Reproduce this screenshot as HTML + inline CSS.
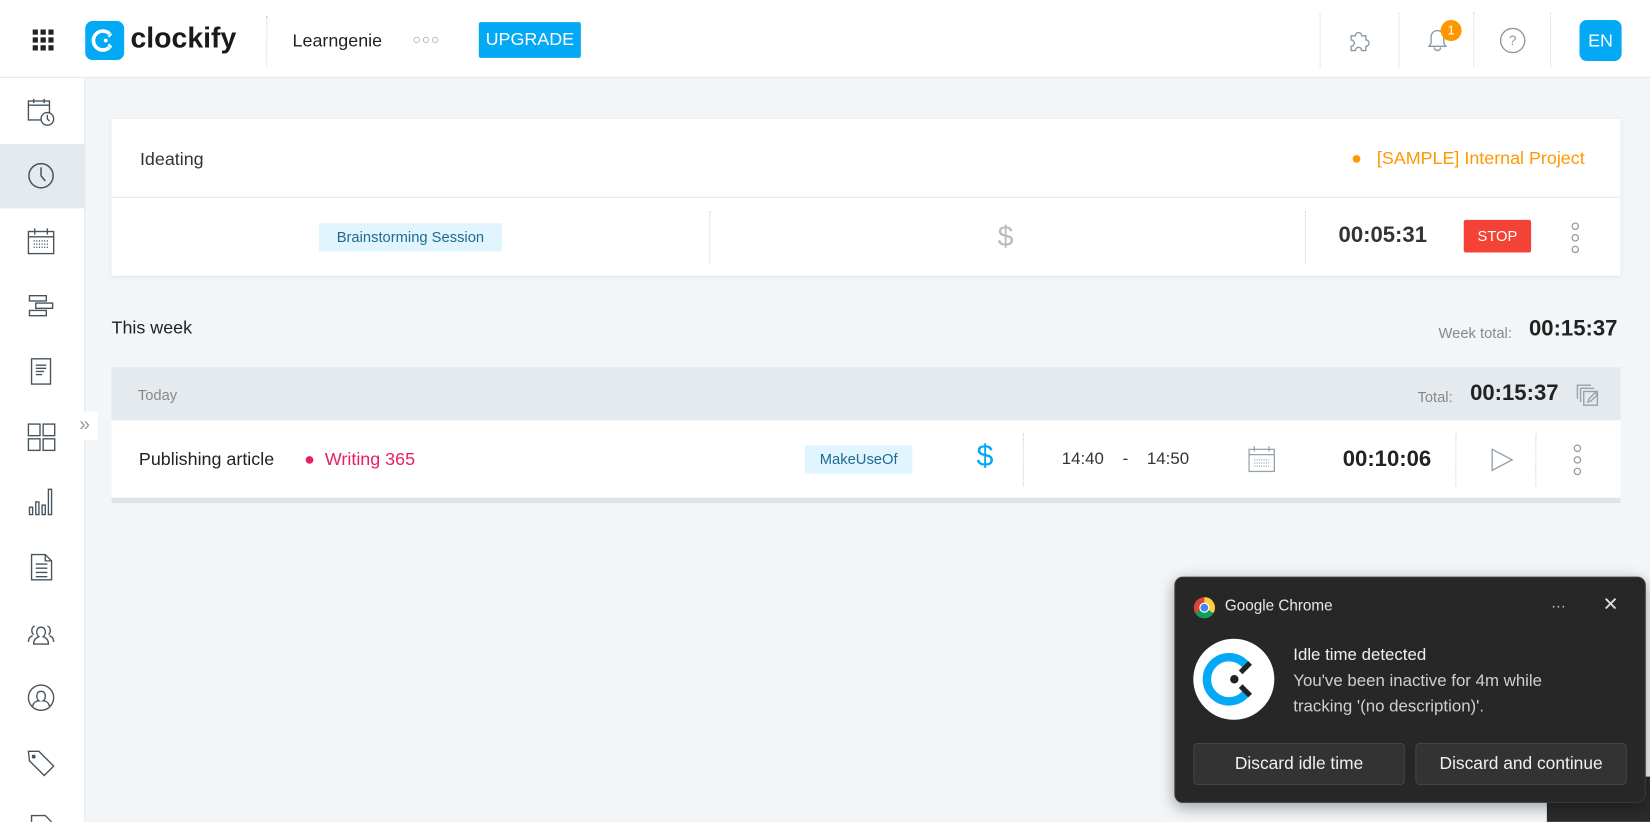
<!DOCTYPE html>
<html><head><meta charset="utf-8"><style>
*{box-sizing:border-box;margin:0;padding:0}
html,body{width:1650px;height:822px;overflow:hidden;background:#f2f6f8;font-family:"Liberation Sans",Arial,sans-serif}
#o{position:relative;width:1650px;height:822px;overflow:hidden}
#w{position:absolute;left:0;top:0;width:1568px;height:781px;overflow:hidden;transform:scale(1.05230);transform-origin:0 0;background:#f2f6f8}
.a{position:absolute}
.hdr{left:0;top:0;width:1568px;height:74px;background:#fff;border-bottom:1px solid #e1e7ec}
.vd{position:absolute;top:12px;height:52px;border-left:1px dotted #cfd6dc}
.side{left:0;top:74px;width:81px;height:708px;background:#fff;border-right:1px solid #e1e7ec}
.ic{position:absolute;left:24px;width:30px;height:30px}
.card{background:#fff;box-shadow:0 1px 4px rgba(0,0,0,.08)}
svg{display:block}
</style></head><body><div id="o"><div id="w">
<div class="a hdr">
 <svg class="a" style="left:31px;top:28px" width="20" height="20"><g fill="#222"><rect x="0" y="0" width="5" height="5"/><rect x="7.5" y="0" width="5" height="5"/><rect x="15" y="0" width="5" height="5"/><rect x="0" y="7.5" width="5" height="5"/><rect x="7.5" y="7.5" width="5" height="5"/><rect x="15" y="7.5" width="5" height="5"/><rect x="0" y="15" width="5" height="5"/><rect x="7.5" y="15" width="5" height="5"/><rect x="15" y="15" width="5" height="5"/></g></svg>
 <div class="a" style="left:81px;top:20px;width:37px;height:37px;background:#03a9f4;border-radius:7px"><svg width="37" height="37"><path d="M23 12 A9 9 0 1 0 23 25" stroke="#fff" stroke-width="3.5" fill="none"/><circle cx="19.5" cy="18.5" r="1.8" fill="#fff"/><path d="M22 15 L25 12 M22 22 L25 25" stroke="#fff" stroke-width="2"/></svg></div>
 <div class="a" style="left:124px;top:21px;font-size:27px;font-weight:bold;color:#1a1a1a">clockify</div>
 <div class="vd" style="left:253px;top:15px;height:48px"></div>
 <div class="a" style="left:278px;top:29px;font-size:17px;color:#222">Learngenie</div>
 <div class="a" style="left:392px;top:30px;font-size:13px;color:#999;letter-spacing:1px">○○○</div>
 <div class="a" style="left:455px;top:21px;width:97px;height:34px;background:#03a9f4;color:#fff;font-size:17px;text-align:center;line-height:34px;border-radius:2px">UPGRADE</div>
 <div class="vd" style="left:1254px"></div><div class="vd" style="left:1329px"></div><div class="vd" style="left:1400px"></div><div class="vd" style="left:1473px"></div>
 <svg class="a" style="left:1279px;top:26px" width="24" height="24"><path d="M5 8h4a3 3 0 1 1 6 0h4v4a3 3 0 1 1 0 6v4h-4a3 3 0 1 0-6 0H5v-4a3 3 0 1 0 0-6z" fill="none" stroke="#8a99a5" stroke-width="1.3"/></svg>
 <svg class="a" style="left:1353px;top:24px" width="26" height="28"><path d="M5 20h16l-2-3v-6a6 6 0 0 0-12 0v6z M10 21a3 3 0 0 0 6 0" fill="none" stroke="#8a99a5" stroke-width="1.3"/></svg>
 <div class="a" style="left:1369px;top:19px;width:20px;height:20px;border-radius:10px;background:#ff9800;color:#fff;font-size:12px;text-align:center;line-height:20px">1</div>
 <svg class="a" style="left:1425px;top:26px" width="25" height="25"><circle cx="12.5" cy="12.5" r="11.5" fill="none" stroke="#8a99a5" stroke-width="1.3"/><text x="12.5" y="17" font-size="13" text-anchor="middle" fill="#8a99a5" font-family="Liberation Sans">?</text></svg>
 <div class="a" style="left:1501px;top:19px;width:40px;height:39px;background:#03a9f4;border-radius:7px;color:#fff;font-size:17px;text-align:center;line-height:39px">EN</div>
</div>
<div class="a side">
 <div class="a" style="left:0;top:63px;width:81px;height:61px;background:#e4eaee"></div>
 <svg class="ic" style="top:17px" width="30" height="30" viewBox="0 0 30 30" fill="none" stroke="#45535e" stroke-width="1.3"><rect x="3" y="5" width="20" height="18"/><path d="M3 9h20M8 3v4M18 3v4"/><circle cx="21" cy="22" r="6" fill="#fff"/><path d="M21 18v4l2 2"/></svg>
 <svg class="ic" style="top:78px" width="30" height="30" fill="none" stroke="#45535e" stroke-width="1.4"><circle cx="15" cy="15" r="11.5"/><path d="M15 7v8l4 5"/></svg>
 <svg class="ic" style="top:141px" width="30" height="30" fill="none" stroke="#45535e" stroke-width="1.3"><rect x="3" y="5" width="24" height="21"/><path d="M3 10h24M9 2v6M21 2v6"/><path d="M8 14h14M8 17h14M8 20h14" stroke-dasharray="1 1.5"/></svg>
 <svg class="ic" style="top:202px" width="30" height="30" fill="none" stroke="#45535e" stroke-width="1.3"><rect x="4" y="5" width="16" height="5"/><rect x="10" y="12" width="16" height="5"/><rect x="4" y="19" width="16" height="5"/></svg>
 <svg class="ic" style="top:264px" width="30" height="30" fill="none" stroke="#45535e" stroke-width="1.3"><path d="M6 3h18v24H6z"/><path d="M10 9h10M10 12h10M10 15h8M10 18h6"/></svg>
 <svg class="ic" style="top:326px" width="30" height="30" fill="none" stroke="#45535e" stroke-width="1.3"><rect x="3" y="3" width="11" height="11"/><rect x="17" y="3" width="11" height="11"/><rect x="3" y="17" width="11" height="11"/><rect x="17" y="17" width="11" height="11"/></svg>
 <svg class="ic" style="top:388px" width="30" height="30" fill="none" stroke="#45535e" stroke-width="1.3"><rect x="4" y="20" width="3" height="7"/><rect x="10" y="15" width="3" height="12"/><rect x="16" y="18" width="3" height="9"/><rect x="22" y="3" width="3" height="24"/></svg>
 <svg class="ic" style="top:450px" width="30" height="30" fill="none" stroke="#45535e" stroke-width="1.3"><path d="M6 3h13l6 6v18H6z M19 3v6h6"/><path d="M10 12h11M10 16h11M10 20h11M10 24h11"/></svg>
 <svg class="ic" style="top:512px" width="30" height="30" fill="none" stroke="#45535e" stroke-width="1.3"><path d="M8 26c0-5 3-6 5-7-3-2-3-9 2-9s5 7 2 9c2 1 5 2 5 7z M8 17c-2-1-3-7 1-8 M22 17c2-1 3-7-1-8 M3 24c0-4 2-5 4-6 M27 24c0-4-2-5-4-6"/></svg>
 <svg class="ic" style="top:574px" width="30" height="30" fill="none" stroke="#45535e" stroke-width="1.3"><circle cx="15" cy="15" r="12"/><path d="M7 23c1-4 4-5 6-5-3-2-3-9 2-9s5 7 2 9c2 0 5 1 6 5"/></svg>
 <svg class="ic" style="top:636px" width="30" height="30" fill="none" stroke="#45535e" stroke-width="1.3"><path d="M3 4h10l14 14-9 9L4 13z"/><circle cx="8" cy="9" r="1.2" fill="#45535e"/></svg>
 <svg class="ic" style="top:698px" width="30" height="30" fill="none" stroke="#45535e" stroke-width="1.3"><path d="M6 3h13l6 6v18H6z"/></svg>
</div>
<div class="a" style="left:68px;top:391px;width:25px;height:27px;background:#fff;color:#8a99a5;font-size:18px;text-align:center;line-height:25px">»</div>

<div class="a card" style="left:106px;top:113px;width:1434px;height:149px">
 <div class="a" style="left:0;top:74px;width:1434px;border-top:1px solid #e4eaee"></div>
 <div class="a" style="left:27px;top:29px;font-size:17px;color:#333">Ideating</div>
 <div class="a" style="left:1178px;top:28px;font-size:17px;color:#ff9800">●&nbsp;&nbsp; [SAMPLE] Internal Project</div>
 <div class="a" style="left:197px;top:99px;width:174px;height:27px;background:#e1f5fe;color:#1e6b8f;font-size:14px;text-align:center;line-height:27px">Brainstorming Session</div>
 <div class="a" style="left:568px;top:88px;height:50px;border-left:1px dotted #ccd"></div>
 <div class="a" style="left:842px;top:97px;font-size:27px;color:#bbb;font-weight:300">$</div>
 <div class="a" style="left:1134px;top:88px;height:50px;border-left:1px dotted #ccd"></div>
 <div class="a" style="left:1166px;top:99px;font-size:21px;font-weight:bold;color:#333">00:05:31</div>
 <div class="a" style="left:1285px;top:96px;width:64px;height:31px;background:#f44336;color:#fff;font-size:14px;text-align:center;line-height:31px;border-radius:2px">STOP</div>
 <svg class="a" style="left:1385px;top:97px" width="12" height="32" fill="none" stroke="#999" stroke-width="1.2"><circle cx="6" cy="5" r="3"/><circle cx="6" cy="16" r="3"/><circle cx="6" cy="27" r="3"/></svg>
</div>

<div class="a" style="left:106px;top:302px;font-size:17px;color:#222">This week</div>
<div class="a" style="left:1367px;top:308px;font-size:14px;color:#888">Week total:</div>
<div class="a" style="left:1453px;top:301px;font-size:21px;font-weight:bold;color:#222">00:15:37</div>

<div class="a" style="left:106px;top:349px;width:1434px;height:50px;background:#e4eaee"></div>
<div class="a" style="left:131px;top:367px;font-size:14px;color:#888">Today</div>
<div class="a" style="left:1347px;top:369px;font-size:14px;color:#888">Total:</div>
<div class="a" style="left:1397px;top:362px;font-size:21px;font-weight:bold;color:#222">00:15:37</div>
<svg class="a" style="left:1496px;top:362px" width="26" height="26" fill="none" stroke="#95a3ad" stroke-width="1.3"><path d="M3 17V4h13 M6 20V7h13 M9 23h13V10H9z M13 20l1-3 6-6 2 2-6 6z"/></svg>
<div class="a" style="left:106px;top:400px;width:1434px;height:74px;background:#fff"></div>
<div class="a" style="left:106px;top:473px;width:1434px;height:5px;background:#dde4ea"></div>
<div class="a" style="left:132px;top:427px;font-size:17px;color:#222">Publishing article</div>
<div class="a" style="left:289px;top:427px;font-size:17px;color:#e91e63">●&nbsp; Writing 365</div>
<div class="a" style="left:765px;top:423px;width:102px;height:27px;background:#e1f5fe;color:#1e6b8f;font-size:14px;text-align:center;line-height:27px">MakeUseOf</div>
<div class="a" style="left:928px;top:418px;font-size:29px;color:#03a9f4">$</div>
<div class="a" style="left:972px;top:412px;height:50px;border-left:1px dotted #ccd"></div>
<div class="a" style="left:1009px;top:428px;font-size:16px;color:#333">14:40&nbsp;&nbsp;&nbsp;&nbsp;-&nbsp;&nbsp;&nbsp;&nbsp;14:50</div>
<svg class="a" style="left:1186px;top:424px" width="26" height="26" fill="none" stroke="#95a3ad" stroke-width="1.2"><rect x="1" y="3" width="24" height="21"/><path d="M1 8h24M6 0v5M20 0v5"/><path d="M6 13h14M6 16h14M6 19h14" stroke-dasharray="1 1.2"/></svg>
<div class="a" style="left:1276px;top:425px;font-size:21px;font-weight:bold;color:#222">00:10:06</div>
<div class="a" style="left:1383px;top:412px;height:50px;border-left:1px dotted #ccd"></div>
<svg class="a" style="left:1416px;top:425px" width="24" height="24" fill="none" stroke="#95a3ad" stroke-width="1.3"><path d="M2 2l19 10-19 10z"/></svg>
<div class="a" style="left:1459px;top:412px;height:50px;border-left:1px dotted #ccd"></div>
<svg class="a" style="left:1493px;top:421px" width="12" height="32" fill="none" stroke="#999" stroke-width="1.2"><circle cx="6" cy="5" r="3"/><circle cx="6" cy="16" r="3"/><circle cx="6" cy="27" r="3"/></svg>

<div class="a" style="left:1470px;top:738px;width:98px;height:44px;background:#2b2b2b"></div>
<div class="a" style="left:1116px;top:548px;width:448px;height:215px;background:#272727;border:1px solid #3a3a3a;border-radius:8px;box-shadow:0 4px 14px rgba(0,0,0,.35)">
 <svg class="a" style="left:17px;top:18px" width="21" height="21"><circle cx="10.5" cy="10.5" r="10" fill="#db4437"/><path d="M10.5 10.5 L19.2 15.5 A10 10 0 0 1 1.8 15.5 Z" fill="#0f9d58"/><path d="M10.5 10.5 L19.2 15.5 A10 10 0 0 0 10.5 0.5 Z" fill="#ffcd40"/><circle cx="10.5" cy="10.5" r="4.8" fill="#fff"/><circle cx="10.5" cy="10.5" r="3.7" fill="#4285f4"/></svg>
 <div class="a" style="left:47px;top:19px;font-size:14.5px;color:#e8e8e8">Google Chrome</div>
 <div class="a" style="left:357px;top:18px;font-size:14px;color:#ccc">···</div>
 <div class="a" style="left:406px;top:15px;font-size:18px;color:#ddd">✕</div>
 <div class="a" style="left:17px;top:58px;width:77px;height:77px;border-radius:50%;background:#fff"><svg width="77" height="77"><path d="M50 25 A21 21 0 1 0 50 52" stroke="#03a9f4" stroke-width="8" fill="none"/><circle cx="39" cy="38.5" r="4" fill="#222"/><path d="M45 32 L54 23 M45 45 L54 54" stroke="#222" stroke-width="5"/></svg></div>
 <div class="a" style="left:112px;top:65px;font-size:16px;color:#f0f0f0">Idle time detected</div>
 <div class="a" style="left:112px;top:87px;font-size:16px;color:#cfcfcf;line-height:24px;width:270px">You've been inactive for 4m while tracking '(no description)'.</div>
 <div class="a" style="left:17px;top:157px;width:201px;height:40px;background:#333;border:1px solid #444;border-radius:4px;color:#f0f0f0;font-size:16.5px;text-align:center;line-height:38px">Discard idle time</div>
 <div class="a" style="left:228px;top:157px;width:201px;height:40px;background:#333;border:1px solid #444;border-radius:4px;color:#f0f0f0;font-size:16.5px;text-align:center;line-height:38px">Discard and continue</div>
</div>
</div></div></body></html>
